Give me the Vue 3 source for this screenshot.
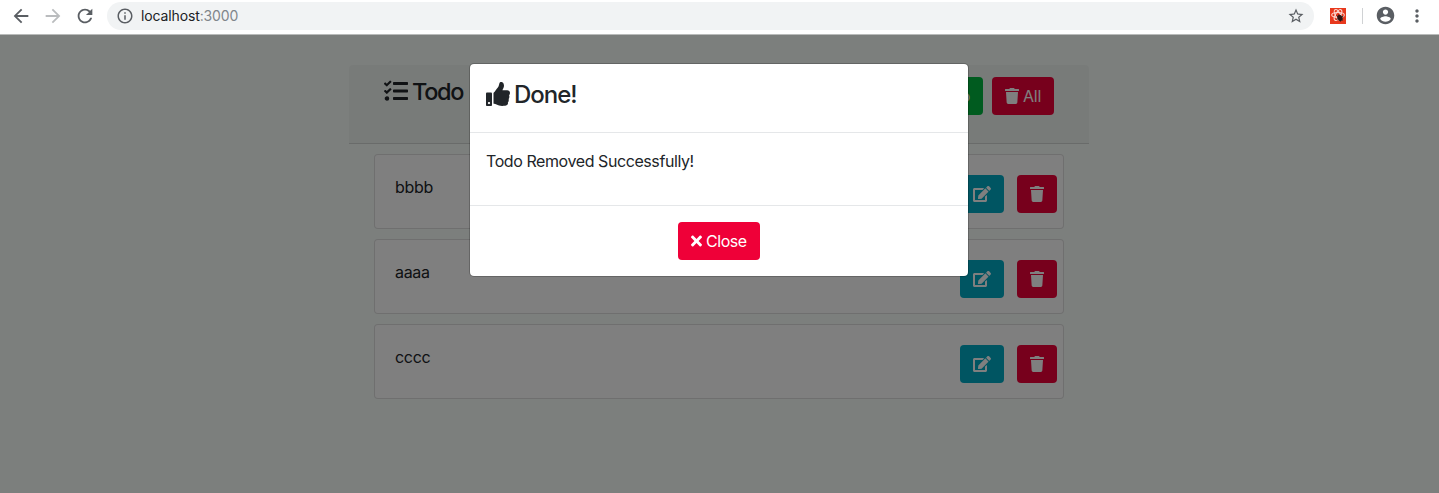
<script setup>
import { h } from 'vue'

const icons = {
  tasks: ['0 0 512 512', 'M139.61 35.5a12 12 0 0 0-17 0L58.93 98.81l-22.7-22.12a12 12 0 0 0-17 0L3.53 92.41a12 12 0 0 0 0 17l47.59 47.4a12.78 12.78 0 0 0 17.61 0l15.59-15.62L156.52 69a12.09 12.09 0 0 0 .09-17zm0 159.19a12 12 0 0 0-17 0l-63.68 63.72-22.7-22.1a12 12 0 0 0-17 0L3.53 252a12 12 0 0 0 0 17L51 316.5a12.77 12.77 0 0 0 17.6 0l15.7-15.69 72.2-72.22a12 12 0 0 0 .09-16.9zM64 368c-26.49 0-48.59 21.5-48.59 48S37.53 464 64 464a48 48 0 0 0 0-96zm432 16H208a16 16 0 0 0-16 16v32a16 16 0 0 0 16 16h288a16 16 0 0 0 16-16v-32a16 16 0 0 0-16-16zm0-320H208a16 16 0 0 0-16 16v32a16 16 0 0 0 16 16h288a16 16 0 0 0 16-16V80a16 16 0 0 0-16-16zm0 160H208a16 16 0 0 0-16 16v32a16 16 0 0 0 16 16h288a16 16 0 0 0 16-16v-32a16 16 0 0 0-16-16z'],
  thumb: ['0 0 512 512', 'M104 224H24c-13.255 0-24 10.745-24 24v240c0 13.255 10.745 24 24 24h80c13.255 0 24-10.745 24-24V248c0-13.255-10.745-24-24-24zM64 472c-13.255 0-24-10.745-24-24s10.745-24 24-24 24 10.745 24 24-10.745 24-24 24zM384 81.452c0 42.416-25.97 66.208-33.277 94.548h101.723c33.397 0 59.397 27.746 59.553 58.098.084 17.938-7.546 37.249-19.439 49.197l-.11.11c9.836 23.337 8.237 56.037-9.308 79.469 8.681 25.895-.069 57.704-16.382 74.757 4.298 17.598 2.244 32.575-6.148 44.632C440.202 511.587 389.616 512 346.839 512l-2.845-.001c-48.287-.017-87.806-17.598-119.56-31.725-15.957-7.099-36.821-15.887-52.651-16.178-6.54-.12-11.783-5.457-11.783-11.998v-213.77c0-3.2 1.282-6.271 3.558-8.521 39.614-39.144 56.648-80.587 89.117-113.111 14.804-14.832 20.188-37.236 25.393-58.902C282.515 39.293 291.817 0 312 0c24 0 72 8 72 81.452z'],
  trash: ['0 0 448 512', 'M432 32H312l-9.4-18.7A24 24 0 0 0 281.1 0H166.8a23.72 23.72 0 0 0-21.4 13.3L136 32H16A16 16 0 0 0 0 48v32a16 16 0 0 0 16 16h416a16 16 0 0 0 16-16V48a16 16 0 0 0-16-16zM53.2 467a48 48 0 0 0 47.9 45h245.8a48 48 0 0 0 47.9-45L416 128H32z'],
  edit: ['0 0 576 512', 'M402.6 83.2l90.2 90.2c3.8 3.8 3.8 10 0 13.8L274.4 405.6l-92.8 10.3c-12.4 1.4-22.9-9.1-21.5-21.5l10.3-92.8L388.8 83.2c3.8-3.8 10-3.8 13.8 0zm162-22.9l-48.8-48.8c-15.2-15.2-39.9-15.2-55.2 0l-35.4 35.4c-3.8 3.8-3.8 10 0 13.8l90.2 90.2c3.8 3.8 10 3.8 13.8 0l35.4-35.4c15.2-15.3 15.2-40 0-55.2zM384 346.2V448H64V128h229.8c3.2 0 6.2-1.3 8.5-3.5l40-40c7.6-7.6 2.2-20.5-8.5-20.5H48C21.5 64 0 85.5 0 112v352c0 26.5 21.5 48 48 48h352c26.5 0 48-21.5 48-48V306.2c0-10.7-12.9-16-20.5-8.5l-40 40c-2.2 2.3-3.5 5.3-3.5 8.5z'],
  times: ['0 0 352 512', 'M242.72 256l100.07-100.07c12.28-12.28 12.28-32.19 0-44.48l-22.24-22.24c-12.28-12.28-32.19-12.28-44.48 0L176 189.28 75.93 89.21c-12.28-12.28-32.19-12.28-44.48 0L9.21 111.45c-12.28 12.28-12.28 32.19 0 44.48L109.28 256 9.21 356.07c-12.28 12.28-12.28 32.19 0 44.48l22.24 22.24c12.28 12.28 32.2 12.28 44.48 0L176 322.72l100.07 100.07c12.28 12.28 32.2 12.28 44.48 0l22.24-22.24c12.28-12.28 12.28-32.19 0-44.48L242.72 256z'],
  back: ['0 0 24 24', 'M20 11H7.83l5.59-5.59L12 4l-8 8 8 8 1.41-1.41L7.83 13H20v-2z'],
  forward: ['0 0 24 24', 'M12 4l-1.41 1.41L16.17 11H4v2h12.17l-5.58 5.59L12 20l8-8z'],
  reload: ['0 0 24 24', 'M17.65 6.35C16.2 4.9 14.21 4 12 4c-4.42 0-7.99 3.58-7.99 8s3.57 8 7.99 8c3.73 0 6.84-2.55 7.73-6h-2.08c-.82 2.33-3.04 4-5.65 4-3.31 0-6-2.69-6-6s2.69-6 6-6c1.66 0 3.14.69 4.22 1.78L13 11h7V4l-2.35 2.35z'],
  info: ['0 0 24 24', 'M11 7h2v2h-2zm0 4h2v6h-2zm1-9C6.48 2 2 6.48 2 12s4.48 10 10 10 10-4.48 10-10S17.52 2 12 2zm0 18c-4.41 0-8-3.59-8-8s3.59-8 8-8 8 3.59 8 8-3.59 8-8 8z'],
  star: ['0 0 24 24', 'M22 9.24l-7.19-.62L12 2 9.19 8.63 2 9.24l5.46 4.73L5.82 21 12 17.27 18.18 21l-1.63-7.03L22 9.24zM12 15.4l-3.76 2.27 1-4.28-3.32-2.88 4.38-.38L12 6.1l1.71 4.04 4.38.38-3.32 2.88 1 4.28L12 15.4z'],
  account: ['0 0 24 24', 'M12 2C6.48 2 2 6.48 2 12s4.48 10 10 10 10-4.48 10-10S17.52 2 12 2zm0 3c1.66 0 3 1.34 3 3s-1.34 3-3 3-3-1.34-3-3 1.34-3 3-3zm0 14.2c-2.5 0-4.71-1.28-6-3.22.03-1.99 4-3.08 6-3.08 1.99 0 5.97 1.09 6 3.08-1.29 1.94-3.5 3.22-6 3.22z'],
  more: ['0 0 24 24', 'M12 8c1.1 0 2-.9 2-2s-.9-2-2-2-2 .9-2 2 .9 2 2 2zm0 2c-1.1 0-2 .9-2 2s.9 2 2 2 2-.9 2-2-.9-2-2-2zm0 6c-1.1 0-2 .9-2 2s.9 2 2 2 2-.9 2-2-.9-2-2-2z'],
}

const Icon = (props) =>
  h('svg', { viewBox: icons[props.name][0], fill: 'currentColor', 'aria-hidden': 'true' }, [
    h('path', { d: icons[props.name][1] }),
  ])
Icon.props = ['name']

const todos = ['bbbb', 'aaaa', 'cccc']
</script>

<template>
  <div class="window">
    <header class="toolbar">
      <Icon name="back" class="nav" />
      <Icon name="forward" class="nav disabled" />
      <Icon name="reload" class="nav" />
      <div class="omnibox">
        <Icon name="info" class="info" />
        <span class="url">localhost<span class="port">:3000</span></span>
        <Icon name="star" class="star" />
      </div>
      <svg class="extension" viewBox="0 0 16 16" aria-hidden="true">
        <rect width="16" height="16" fill="#e8391d" />
        <g fill="none" stroke="#fbd9d2" stroke-width="1.1">
          <ellipse cx="8" cy="7" rx="6.3" ry="2.5" />
          <ellipse cx="8" cy="7" rx="6" ry="2.5" transform="rotate(60 8 7)" />
          <ellipse cx="8" cy="7" rx="6" ry="2.5" transform="rotate(120 8 7)" />
        </g>
        <ellipse cx="10" cy="10" rx="2.5" ry="3.2" fill="#2b1714" transform="rotate(-30 10 10)" />
        <path d="M6.5 7.5l6 5M6.5 11.5l7-3.5M8.5 6.5l2 7" stroke="#2b1714" stroke-width=".8" />
      </svg>
      <span class="divider"></span>
      <Icon name="account" class="account" />
      <Icon name="more" class="more" />
    </header>

    <main class="page">
      <section class="app">
        <div class="app-header">
          <h4 class="title app-title"><Icon name="tasks" class="title-icon" />Todo App</h4>
          <div class="header-actions">
            <button class="btn success">+ Todo</button>
            <button class="btn danger"><Icon name="trash" class="trash" />All</button>
          </div>
        </div>
        <div class="list">
          <article v-for="todo in todos" :key="todo" class="todo">
            <span class="todo-text">{{ todo }}</span>
            <button class="btn info-btn"><Icon name="edit" class="edit" /></button>
            <button class="btn danger"><Icon name="trash" class="trash" /></button>
          </article>
        </div>
      </section>

      <div class="backdrop">
        <div class="modal">
          <div class="modal-header">
            <h4 class="title"><Icon name="thumb" class="title-icon" />Done!</h4>
          </div>
          <div class="modal-body">Todo Removed Successfully!</div>
          <div class="modal-footer">
            <button class="btn danger close"><Icon name="times" class="times" />Close</button>
          </div>
        </div>
      </div>
    </main>
  </div>
</template>

<style>
body { margin: 0; overflow: hidden; }
</style>

<style scoped>
* { box-sizing: border-box; }
svg { display: block; flex: none; }
.window {
  height: 493px;
  display: flex;
  flex-direction: column;
  font-family: Inter, "Liberation Sans", sans-serif;
  font-size: 16px;
  line-height: 24px;
  letter-spacing: -0.3px;
  color: #212529;
}
.toolbar {
  height: 35px;
  flex: none;
  display: flex;
  align-items: center;
  padding: 0 10px 3px;
  background: #fff;
  border-bottom: 1px solid #b9bbba;
  color: #5a5e63;
}
.nav { width: 22px; height: 22px; margin-right: 10px; }
.nav.disabled { color: #babcbe; }
.omnibox {
  width: 1207px;
  height: 28px;
  margin-left: 1px;
  padding: 0 9px;
  border-radius: 14px;
  background: #f1f3f4;
  display: flex;
  align-items: center;
}
.info { width: 18px; height: 18px; }
.url { margin-left: 7px; font-size: 14px; letter-spacing: -0.13px; color: #202124; }
.port { color: #80868b; }
.star { width: 18px; height: 18px; margin-left: auto; }
.extension { width: 16px; height: 16px; margin-left: 16px; }
.divider { width: 1px; height: 16px; margin-left: 16px; background: #d0d2d4; }
.account { width: 21px; height: 21px; margin-left: 12px; }
.more { width: 20px; height: 20px; margin-left: 11px; }

.page {
  position: relative;
  flex: 1;
  background: #f9fefb;
}
.app { width: 740px; margin: 0 auto; padding-top: 30px; position: relative; left: -0.5px; }
.app-header {
  height: 79px;
  display: flex;
  justify-content: space-between;
  align-items: flex-start;
  padding: 12px 35px;
  background: rgba(0, 0, 0, 0.03);
  border-bottom: 1px solid rgba(0, 0, 0, 0.125);
  border-radius: 4px 4px 0 0;
}
.title {
  margin: 0;
  display: flex;
  align-items: center;
  gap: 4px;
  font-size: 24px;
  font-weight: 500;
  line-height: 29px;
  letter-spacing: -1px;
}
.app-title { font-size: 23.5px; letter-spacing: -1.3px; word-spacing: 4px; }
.title-icon { width: 24px; height: 24px; position: relative; top: -1px; }
.header-actions { display: flex; gap: 9px; }
.btn {
  height: 38px;
  display: flex;
  align-items: center;
  padding: 0 13px;
  border: 0;
  border-radius: 4px;
  color: #fff;
  font: inherit;
  letter-spacing: inherit;
}
.danger { background: #ef0038; }
.success { background: #00b63f; }
.info-btn { background: #00aac5; }
.trash { width: 14px; height: 16px; }
.header-actions .trash { margin-right: 4px; }
.edit { width: 18px; height: 16px; }
.close { width: 82px; letter-spacing: -0.45px; }
.times { width: 11px; height: 16px; margin-right: 4px; }

.list { padding: 10px 25px; display: flex; flex-direction: column; gap: 10px; }
.todo {
  height: 75px;
  display: flex;
  align-items: flex-start;
  gap: 13px;
  padding: 20px 6px 20px 20px;
  background: #fff;
  border: 1px solid rgba(0, 0, 0, 0.125);
  border-radius: 4px;
}
.todo-text { flex: 1; }

.backdrop {
  position: absolute;
  inset: 0;
  padding-top: 28px;
  background: rgba(0, 0, 0, 0.5);
}
.modal {
  width: 500px;
  height: 214px;
  margin: 0 auto;
  position: relative;
  left: -0.5px;
  display: flex;
  flex-direction: column;
  background: #fff;
  background-clip: padding-box;
  border: 1px solid rgba(0, 0, 0, 0.2);
  border-radius: 5px;
}
.modal-header { height: 69px; padding: 16px; border-bottom: 1px solid #e5e7e9; }
.modal-body { flex: 1; padding: 16px; letter-spacing: -0.42px; }
.modal-footer {
  height: 71px;
  display: flex;
  align-items: center;
  justify-content: center;
  border-top: 1px solid #e5e7e9;
}
</style>
